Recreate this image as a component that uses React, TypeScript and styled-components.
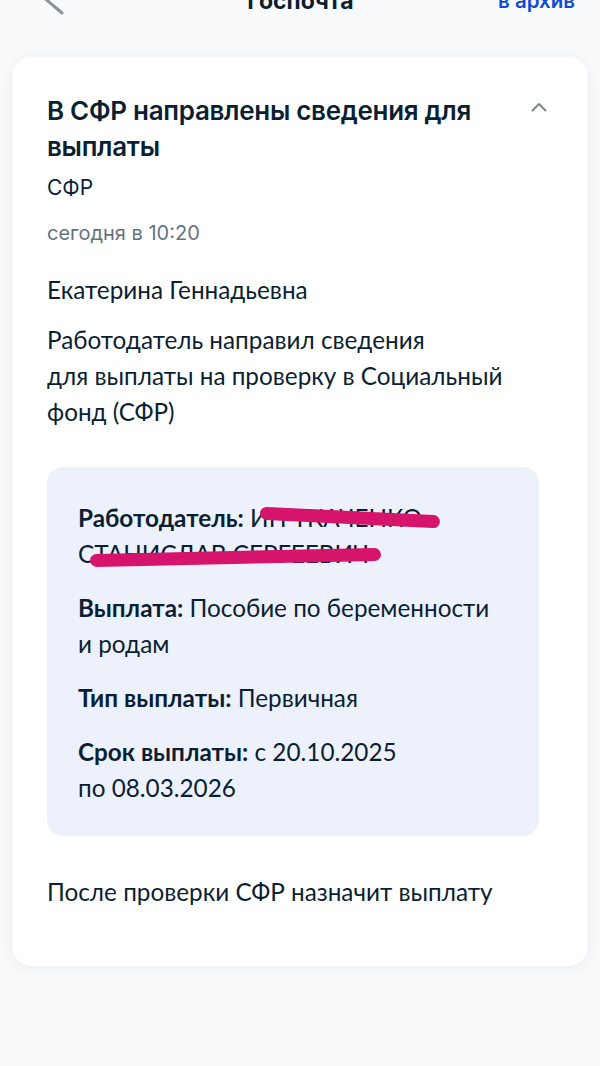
import styled, { createGlobalStyle } from "styled-components";

const GlobalStyle = createGlobalStyle`
  html, body {
    margin: 0;
    padding: 0;
    background: #f9fafc;
  }
  * {
    box-sizing: border-box;
  }
`;

const Page = styled.div`
  width: 600px;
  min-height: 1066px;
  overflow: hidden;
  padding: 0 12px;
  background: #f9fafc;
  color: #0b1f33;
`;

const Header = styled.header`
  height: 30px;
  margin-top: -14px;
  display: grid;
  grid-template-columns: 120px 1fr 120px;
  align-items: center;
  padding: 0 13px 0 14px;
`;

const BackButton = styled.button`
  display: flex;
  align-items: center;
  height: 30px;
  padding: 0;
  border: 0;
  background: none;
`;

const HeaderTitle = styled.h1`
  margin: 0;
  text-align: center;
  font-family: Inter, "Noto Sans", sans-serif;
  font-size: 23px;
  line-height: 30px;
  font-weight: 700;
  color: #0b1f33;
`;

const ArchiveLink = styled.a`
  justify-self: end;
  font-family: Inter, "Noto Sans", sans-serif;
  font-size: 20.5px;
  line-height: 30px;
  font-weight: 600;
  color: #0d4cd3;
  text-decoration: none;
`;

const Card = styled.section`
  margin-top: 41px;
  background: #fff;
  border-radius: 20px;
  box-shadow: 0 2px 14px rgba(30, 50, 90, 0.07);
  padding: 36px 41px 56px 35px;
`;

const CardHead = styled.div`
  display: flex;
  align-items: flex-start;
  justify-content: space-between;
  gap: 20px;
`;

const Title = styled.h2`
  margin: 0;
  font-family: Inter, "Noto Sans", sans-serif;
  font-size: 26px;
  line-height: 36px;
  font-weight: 600;
  letter-spacing: -0.3px;
  color: #0b1f33;
`;

const Collapse = styled.button`
  flex: none;
  margin-top: 4px;
  width: 16px;
  height: 20px;
  padding: 0;
  border: 0;
  background: none;
  display: flex;
  align-items: center;
  justify-content: center;
`;

const Sender = styled.div`
  margin-top: 9px;
  font-family: Inter, "Noto Sans", sans-serif;
  font-size: 21px;
  line-height: 28px;
  color: #0b1f33;
`;

const DateText = styled.div`
  margin-top: 17px;
  font-family: Inter, "Noto Sans", sans-serif;
  font-size: 20px;
  line-height: 28px;
  color: #66727f;
`;

const Body = styled.p<{ gap: number }>`
  margin: ${({ gap }) => gap}px 0 0;
  font-family: Lato, "Noto Sans", sans-serif;
  font-size: 24.3px;
  line-height: 36px;
  color: #0b1f33;
`;

const InfoBox = styled.div`
  margin: 37px 8px 0 0;
  background: #edf1fc;
  border-radius: 16px;
  padding: 33px 30px 30px 31px;
  display: flex;
  flex-direction: column;
  gap: 18px;
`;

const InfoRow = styled.p`
  margin: 0;
  font-family: Lato, "Noto Sans", sans-serif;
  font-size: 24.3px;
  line-height: 36px;
  color: #0b1f33;
`;

const Label = styled.b`
  font-weight: 700;
`;

const Redact = styled.span<{ from: number; to: number; tilt: number; shift: number }>`
  position: relative;

  &::after {
    content: "";
    position: absolute;
    left: ${({ from }) => from}px;
    right: ${({ to }) => to}px;
    top: calc(50% + ${({ shift }) => shift}px);
    height: 13px;
    margin-top: -6px;
    border-radius: 7px;
    background: #d6146b;
    transform: rotate(${({ tilt }) => tilt}deg);
  }
`;

const Footer = styled.p`
  margin: 38px 0 0;
  font-family: Lato, "Noto Sans", sans-serif;
  font-size: 24.3px;
  line-height: 36px;
  color: #0b1f33;
`;

export default function App() {
  return (
    <>
      <GlobalStyle />
      <Page>
        <Header>
          <BackButton aria-label="Назад">
            <svg width="28" height="44" viewBox="0 0 28 44" style={{ marginLeft: 12 }}>
              <polyline
                points="24,0 4,17 24,34"
                fill="none"
                stroke="#8a939d"
                strokeWidth="3"
                strokeLinecap="round"
                strokeLinejoin="round"
              />
            </svg>
          </BackButton>
          <HeaderTitle>Госпочта</HeaderTitle>
          <ArchiveLink href="#">в архив</ArchiveLink>
        </Header>

        <Card>
          <CardHead>
            <Title>В СФР направлены сведения для выплаты</Title>
            <Collapse aria-label="Свернуть">
              <svg width="16" height="10" viewBox="0 0 16 10">
                <polyline
                  points="1.5,8.5 8,2 14.5,8.5"
                  fill="none"
                  stroke="#7b8590"
                  strokeWidth="2"
                  strokeLinecap="round"
                  strokeLinejoin="round"
                />
              </svg>
            </Collapse>
          </CardHead>
          <Sender>СФР</Sender>
          <DateText>сегодня в 10:20</DateText>

          <Body gap={25}>Екатерина Геннадьевна</Body>
          <Body gap={14}>
            Работодатель направил сведения
            <br />
            для выплаты на проверку в Социальный фонд (СФР)
          </Body>

          <InfoBox>
            <InfoRow>
              <Label>Работодатель:</Label>{" "}
              <Redact from={10} to={-18} tilt={2.8} shift={-1}>ИП ТКАЧЕНКО</Redact>{" "}
              <Redact from={12} to={-12} tilt={-1.2} shift={3}>СТАНИСЛАВ СЕРГЕЕВИЧ</Redact>
            </InfoRow>
            <InfoRow>
              <Label>Выплата:</Label> Пособие по беременности и родам
            </InfoRow>
            <InfoRow>
              <Label>Тип выплаты:</Label> Первичная
            </InfoRow>
            <InfoRow>
              <Label>Срок выплаты:</Label> с 20.10.2025
              <br />
              по 08.03.2026
            </InfoRow>
          </InfoBox>

          <Footer>После проверки СФР назначит выплату</Footer>
        </Card>
      </Page>
    </>
  );
}
